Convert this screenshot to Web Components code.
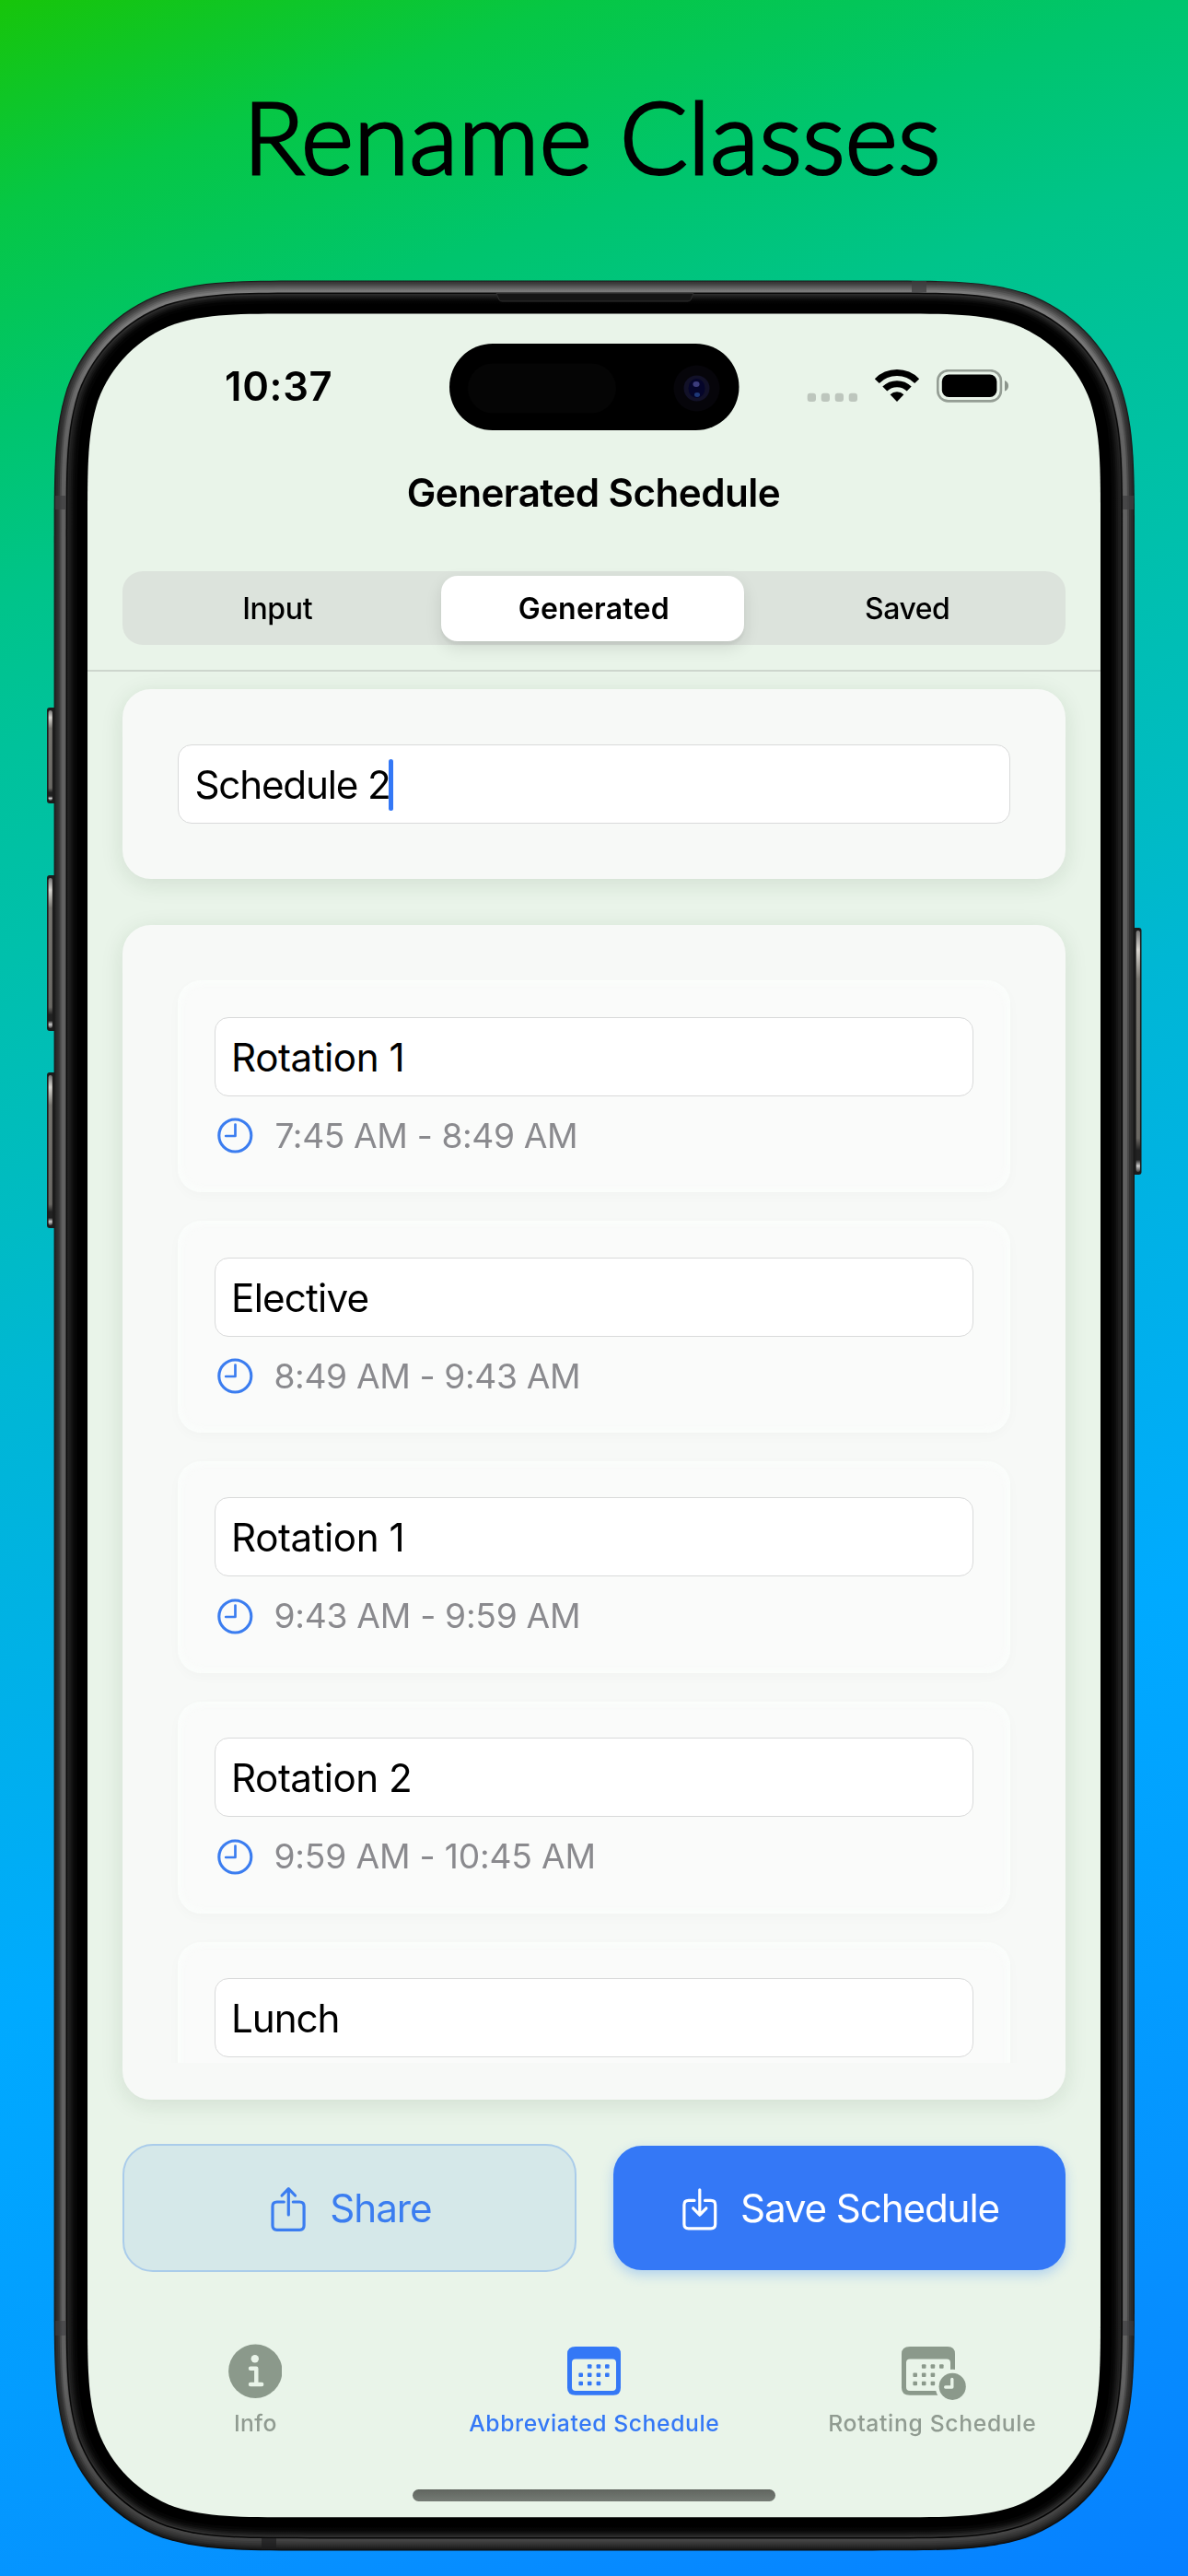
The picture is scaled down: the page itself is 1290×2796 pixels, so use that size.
<!DOCTYPE html>
<html lang="en">
<head>
<meta charset="utf-8">
<title>Rename Classes</title>
<style>
html,body{margin:0;padding:0}
body{width:1290px;height:2796px;overflow:hidden;font-family:Inter,"Liberation Sans",sans-serif;color:#000}
</style>
</head>
<body>
<promo-poster>
  <fit-text slot="headline" w="742">Rename Classes</fit-text>
  <device-frame>
    <status-bar></status-bar>
    <nav-title>Generated Schedule</nav-title>
    <segmented-control></segmented-control>
    <schedule-editor></schedule-editor>
    <action-bar></action-bar>
    <tab-bar></tab-bar>
    <home-indicator></home-indicator>
  </device-frame>
</promo-poster>
<script>
const define = (name, render) => customElements.define(name, class extends HTMLElement {
  connectedCallback() {
    if (this.shadowRoot) return;
    this.attachShadow({ mode: 'open' }).innerHTML = render(this);
  }
});

/* Rounded rectangle with continuous-curvature corners. */
function squircle(x, y, w, h, r) {
  const a = 1.528665 * r, b = 1.08849296 * r, c = 0.86840694 * r, d = 0.63149379 * r,
        e = 0.07491139 * r, f = 0.37282383 * r, g = 0.16905956 * r;
  const X = x + w, Y = y + h;
  return `M${x + a} ${y}L${X - a} ${y}
    C${X - b} ${y} ${X - c} ${y} ${X - d} ${y + e}C${X - f} ${y + g} ${X - g} ${y + f} ${X - e} ${y + d}C${X} ${y + c} ${X} ${y + b} ${X} ${y + a}
    L${X} ${Y - a}C${X} ${Y - b} ${X} ${Y - c} ${X - e} ${Y - d}C${X - g} ${Y - f} ${X - f} ${Y - g} ${X - d} ${Y - e}C${X - c} ${Y} ${X - b} ${Y} ${X - a} ${Y}
    L${x + a} ${Y}C${x + b} ${Y} ${x + c} ${Y} ${x + d} ${Y - e}C${x + f} ${Y - g} ${x + g} ${Y - f} ${x + e} ${Y - d}C${x} ${Y - c} ${x} ${Y - b} ${x} ${Y - a}
    L${x} ${y + a}C${x} ${y + b} ${x} ${y + c} ${x + e} ${y + d}C${x + g} ${y + f} ${x + f} ${y + g} ${x + d} ${y + e}C${x + c} ${y} ${x + b} ${y} ${x + a} ${y}Z`;
}

define('promo-poster', () => `
<style>
:host{display:flex;flex-direction:column;width:1290px;height:2796px;
background:linear-gradient(160deg,#17c50a 0%,#06c745 7%,#00c56d 14%,#00c48a 20%,#00c29b 25%,#00c0ac 32%,#00bbc4 41%,#00b7d4 46%,#00b0ea 57%,#00aaff 67%,#039cff 80%,#0690ff 89%,#067fff 100%)}
.head{height:304px;display:flex;justify-content:center;align-items:flex-start;box-sizing:border-box;padding:80.5px 0 0 2px;
font:300 109px/132px Lato,"Liberation Sans",sans-serif;-webkit-text-stroke:3.2px #000}
</style>
<div class="head"><slot name="headline"></slot></div><slot></slot>`);

/* Metal band and glass edge: [inset, top, side, bottom] */
const RINGS = [
  [0,'#1b1b1b','#191919','#0c0c0c'],[1,'#333','#222','#151515'],[2,'#3c3c3c','#2b2b2b','#1f1f1f'],
  [4,'#4a4a4a','#333','#2a2a2a'],[6,'#5a5a5a','#484848','#333'],[8,'#6a6a6a','#606060','#3b3b3b'],
  [10,'#797979','#636363','#434343'],[12,'#7d7d7d','#565656','#484848'],[13,'#0a0a0a','#0a0a0a','#050505'],
  [14.5,'#2c2c2c','#242424','#303030'],[16,'#1f1f1f','#1d1d1d','#222'],[18,'#141414','#151515','#161616'],
  [20,'#0a0a0a','#0c0c0c','#0c0c0c'],[22,'#030303','#060606','#050505'],[25,'#000','#000','#000']];

define('device-frame', () => {
  const defs = RINGS.map((r, i) => `<linearGradient id="g${i}" x1="0" y1="0" x2="0" y2="1"><stop offset="0" stop-color="${r[1]}"/><stop offset=".015" stop-color="${r[1]}"/><stop offset=".07" stop-color="${r[2]}"/><stop offset=".93" stop-color="${r[2]}"/><stop offset=".985" stop-color="${r[3]}"/></linearGradient>`).join('');
  const rings = RINGS.map((r, i) => { const d = r[0]; return `<path d="${squircle(58.6 + d, 304.4 + d, 1173.4 - 2 * d, 2464 - 2 * d, 186 - d)}" fill="url(#g${i})"/>`; }).join('');
  const key = (x, y, h, flip) => `<g transform="${flip ? `translate(${2 * x + 9} 0) scale(-1 1)` : ''}"><rect x="${x}" y="${y}" width="12" height="${h}" rx="3" fill="#1c1c1c"/><rect x="${x + 1.6}" y="${y + 3}" width="4.2" height="${h - 6}" rx="2" fill="url(#key)"/></g>`;
  return `
<style>
:host{display:grid;width:1290px;height:2492px}
svg{grid-area:1/1;display:block}
main{grid-area:1/1;width:1100px;height:2392px;margin:36px 95px;display:flex;flex-direction:column;min-height:0;overflow:hidden}
</style>
<svg width="1290" height="2492" viewBox="0 304 1290 2492">
<defs>${defs}<linearGradient id="key" x1="0" y1="0" x2="0" y2="1"><stop offset="0" stop-color="#777"/><stop offset=".08" stop-color="#d8d6d0"/><stop offset=".2" stop-color="#77756f"/><stop offset=".86" stop-color="#6b6964"/><stop offset=".91" stop-color="#222"/><stop offset=".95" stop-color="#222"/><stop offset=".975" stop-color="#ccc"/><stop offset="1" stop-color="#444"/></linearGradient></defs>
${key(51, 768, 104)}${key(51, 950, 169)}${key(51, 1164, 169)}${key(1230.5, 1007, 268, true)}
${rings}
<g fill="#3f3f41" opacity=".75"><rect x="990" y="305" width="16" height="12.5"/><rect x="60" y="538" width="12" height="15"/><rect x="1219" y="538" width="12" height="15"/><rect x="60" y="2519" width="12" height="16" opacity=".8"/><rect x="1219" y="2519" width="12" height="16" opacity=".8"/></g>
<rect x="284" y="2755" width="16" height="12" fill="#1c1c1e" opacity=".7"/>
<path d="M539 318.5H753L750 325.5Q749 327 747 327H545Q543 327 542 325.5Z" fill="#161616" stroke="#2e2e2e"/>
<path d="${squircle(95, 340.5, 1100, 2391.8, 150)}" fill="#e9f4e9"/>
</svg>
<main><slot></slot></main>`;
});

define('status-bar', () => `
<style>
:host{display:flex;align-items:center;height:94px;padding:33px 0 0 151px;flex:none;font-size:43.6px;font-weight:600;line-height:50px}
.island{margin-left:128.7px;flex:none}.state{margin-left:73.5px;flex:none}
</style>
<fit-text w="113.6">10:37</fit-text>
<svg class="island" width="314.5" height="94" viewBox="0 0 314.5 94">
<rect width="314.5" height="94" rx="47"/><rect x="20" y="21.5" width="161" height="54" rx="27" fill="#050505"/>
<circle cx="268.5" cy="48.5" r="25" fill="#06050a"/><circle cx="268.5" cy="48.5" r="14" fill="#121128"/><ellipse cx="268.5" cy="48.5" rx="9" ry="10.5" fill="#05052a"/>
<ellipse cx="268" cy="44" rx="3.6" ry="3" fill="#3c3c7c"/><ellipse cx="269" cy="55.5" rx="3" ry="2.4" fill="#1e3878"/></svg>
<svg class="state" width="220" height="38" viewBox="876 401 220 38">
<g fill="#bdc6bd"><rect x="876.7" y="426.7" width="9.3" height="9.4" rx="3"/><rect x="891.7" y="426.7" width="9.3" height="9.4" rx="3"/><rect x="906.7" y="426.7" width="9.3" height="9.4" rx="3"/><rect x="921.7" y="426.7" width="9.3" height="9.4" rx="3"/></g>
<g fill="none" stroke="#000" stroke-width="7"><path d="M952.3 413.6A30.6 30.6 0 0 1 995.7 413.6"/><path d="M960.8 422.1A18.7 18.7 0 0 1 987.2 422.1"/></g>
<path d="M966.6 428.2A10.8 10.8 0 0 1 981.4 428.2L974 436Z"/>
<rect x="1018.3" y="402.2" width="68.6" height="33.2" rx="11.3" fill="none" stroke="#949d94" stroke-width="2.6"/>
<rect x="1022.8" y="406.6" width="59.6" height="24.4" rx="7.5"/><path d="M1091 413Q1095 414.5 1095 418.7Q1095 423 1091 424.5Z" fill="#8b948b"/></svg>`);

define('nav-title', el => `
<style>:host{display:flex;justify-content:center;align-items:center;height:135px;flex:none;font-size:42.2px;font-weight:600;line-height:52px;padding:0 0 18px .5px}</style>
<fit-text w="403">${el.textContent}</fit-text>`);

define('segmented-control', () => `
<style>
:host{display:flex;flex:none;height:80px;box-sizing:border-box;margin:0 38.4px;padding:5px 5px 4.5px;border-radius:22px;background:#dce3dc;font-size:32px;line-height:40px;font-weight:500}
div{flex:1;display:flex;align-items:center;justify-content:center;padding-top:1px}
.first{flex:0 0 328px}
.on{flex:0 0 328.6px;margin:0 10.5px 0 13px;border-radius:18px;background:#fff;font-weight:600;box-sizing:border-box;padding:1.4px 0 0 1px;box-shadow:0 7px 18px rgba(0,0,0,.11),0 4px 3px rgba(0,0,0,.04)}
</style>
<div class="first"><fit-text w="74.5">Input</fit-text></div><div class="on"><fit-text w="161">Generated</fit-text></div><div><fit-text w="90">Saved</fit-text></div>`);

define('surface-card', () => `
<style>
:host{display:block;box-sizing:border-box;padding:60px;border-radius:31px;background:#f7f9f7;box-shadow:0 5px 25px rgba(30,60,30,.115)}
</style><slot></slot>`);

define('text-field', () => `
<style>
:host{display:flex;align-items:center;box-sizing:border-box;height:86px;padding:2px 18.5px 0 20px;border:1.6px solid #d9dada;border-radius:15px;background:#fff;font-size:42.2px;line-height:52px}
</style><slot></slot>`);

define('class-row', el => {
  const [name, nw, time, tw] = ['name', 'nw', 'time', 'tw'].map(k => el.getAttribute(k));
  return `
<style>
:host{display:block;flex:none;box-sizing:border-box;height:230.3px;padding:39.7px;border-radius:26px;background:#fafbfa;box-shadow:inset 0 0 8px 3px rgba(251,254,252,.9),0 4px 14px rgba(30,50,30,.022)}
.time{display:flex;align-items:center;height:40px;margin-top:23px;padding-left:3px;font-size:37.2px;line-height:40px;color:#8a8a8e}
svg{margin-right:24.4px;flex:none}
</style>
<text-field><fit-text w="${nw}">${name}</fit-text></text-field>
${time ? `<div class="time"><svg width="39" height="39" viewBox="0 0 39 39" fill="none" stroke="#3b7df0"><circle cx="19.3" cy="19.5" r="17.5" stroke-width="3.1"/><path d="M19.5 7.5V20H9.2" stroke-width="2.7" stroke-linecap="round" stroke-linejoin="round"/></svg><fit-text w="${tw}">${time}</fit-text></div>` : ''}`;
});

define('schedule-editor', () => `
<style>
:host{display:flex;flex-direction:column;flex:none;margin-top:27px;border-top:2px solid #cdd6cd;padding:19px 38.4px 0}
.name{height:206px}
.name text-field{padding-left:19px}
.name i{flex:none;width:5px;height:56px;border-radius:2.5px;background:#3478f6}
.classes{height:1275px;margin-top:50px}
.list{display:flex;flex-direction:column;gap:30.6px;height:1174.7px;overflow:clip;margin:0 -8px;padding:0 8px}
</style>
<surface-card class="name"><text-field><fit-text w="208.5">Schedule 2</fit-text><i></i></text-field></surface-card>
<surface-card class="classes"><div class="list">
<class-row name="Rotation 1" nw="182.5" time="7:45 AM - 8:49 AM" tw="325.5"></class-row>
<class-row name="Elective" nw="145.5" time="8:49 AM - 9:43 AM" tw="328.5"></class-row>
<class-row name="Rotation 1" nw="182.5" time="9:43 AM - 9:59 AM" tw="328.5"></class-row>
<class-row name="Rotation 2" nw="191" time="9:59 AM - 10:45 AM" tw="345"></class-row>
<class-row name="Lunch" nw="112.5"></class-row>
</div></surface-card>`);

define('action-bar', () => `
<style>
:host{display:flex;align-items:center;flex:none;gap:40px;margin:48.4px 38px 0;height:138.4px;font-size:42.2px;line-height:52px}
div{display:flex;align-items:center;justify-content:center;box-sizing:border-box}
svg{fill:none;stroke:currentColor;stroke-width:3.2;stroke-linecap:round;stroke-linejoin:round;flex:none}
.share{flex:0 0 492.5px;height:138.4px;border-radius:33px;background:#d5e8e9;border:2.6px solid #aaccea;color:#3b7df0;padding-left:3.5px}
.save{flex:1;height:134.6px;border-radius:31px;background:#3478f6;color:#fff;padding-left:3px;box-shadow:0 5px 13px rgba(60,140,250,.32)}
.share svg{margin-right:28.3px}.save svg{margin-right:27.5px}
</style>
<div class="share"><svg width="38" height="50" viewBox="294.7 2372 38 50"><path d="M309 2390H301.5Q296.7 2390 296.7 2394.8V2415.5Q296.7 2420.3 301.5 2420.3H326Q330.8 2420.3 330.8 2415.5V2394.8Q330.8 2390 326 2390H319M314 2404V2376M306.8 2383L314 2375.6L321.2 2383"/></svg><fit-text w="107.6">Share</fit-text></div>
<div class="save"><svg width="37.5" height="50" viewBox="740.5 2373 37.5 50"><path d="M753.5 2389.4H747.2Q742.4 2389.4 742.4 2394.2V2415Q742.4 2419.8 747.2 2419.8H771.4Q776.2 2419.8 776.2 2415V2394.2Q776.2 2389.4 771.4 2389.4H765M759.3 2377.8V2405M752.2 2397.8L759.3 2405.2L766.4 2397.8"/></svg><fit-text w="278.5">Save Schedule</fit-text></div>`);

const dot = (x, y) => `<rect x="${x - 2.3}" y="${y - 2.3}" width="4.6" height="4.6" rx="1"/>`;
const calendar = skip => `<path fill-rule="evenodd" d="M9 3H50Q58 3 58 11V47.7Q58 55.7 50 55.7H9Q0 55.7 0 47.7V11Q0 3 9 3ZM9 16.5Q5 16.5 5 20.5V47Q5 51 9 51H49Q53 51 53 47V20.5Q53 16.5 49 16.5Z"/>`
  + [[24.2,24.5],[33.9,24.5],[43.3,24.5],[14.7,33.7],[24.2,33.7],[33.9,33.7],[43.3,33.7],[14.7,43],[24.2,43],[33.9,43]].filter((_, i) => i !== skip).map(p => dot(...p)).join('');
const ICONS = {
  info: `<svg width="58.6" height="62" viewBox="0 0 58.6 62"><circle cx="29.3" cy="29.7" r="29.2"/><circle cx="28.8" cy="16.2" r="4.2" fill="#e9f4e9"/><path d="M24 26.8H30.3V44M24 44H36.2" fill="none" stroke="#e9f4e9" stroke-width="4.4" stroke-linecap="round" stroke-linejoin="round"/></svg>`,
  calendar: `<svg width="58" height="62" viewBox="0 0 58 62">${calendar()}</svg>`,
  clock: `<svg width="70" height="62" viewBox="0 0 70 62">${calendar(6)}<circle cx="55.2" cy="46.3" r="18.6" fill="#e9f4e9"/><circle cx="55.2" cy="46.3" r="14.6"/><path d="M54.8 38.4V47H47.7" fill="none" stroke="#e9f4e9" stroke-width="3.4" stroke-linecap="round" stroke-linejoin="round"/></svg>`
};
define('tab-item', el => `
<style>
:host{flex:1;display:flex;flex-direction:column;align-items:center;color:#909b91;fill:#8b998b;font-size:24.7px;font-weight:500;line-height:30px}
:host([active]){color:#3478f6;fill:#3478f6}
svg{display:block;margin-bottom:9.2px;transform:translateX(var(--nudge,0))}
</style>${ICONS[el.getAttribute('icon')]}<fit-text w="${el.getAttribute('w')}">${el.textContent}</fit-text>`);

define('tab-bar', () => `
<style>:host{display:flex;flex:none;margin:78.4px -1px 0 -1.6px;height:103px}</style>
<tab-item icon="info" w="44.5">Info</tab-item>
<tab-item icon="calendar" w="271" active>Abbreviated Schedule</tab-item>
<tab-item icon="clock" w="224" style="--nudge:2px">Rotating Schedule</tab-item>`);

define('home-indicator', () => `
<style>:host{display:flex;justify-content:center;margin-top:55px;flex:none}
div{width:393.5px;height:13px;border-radius:6.5px;background:linear-gradient(#60655f,#757b75)}</style><div></div>`);

/* One line of text whose box is its ink width; tracking is adjusted to reach w. */
customElements.define('fit-text', class extends HTMLElement {
  connectedCallback() {
    if (this.shadowRoot) return;
    const text = this.textContent.trim(), w = +this.getAttribute('w'), cs = getComputedStyle(this);
    const ctx = document.createElement('canvas').getContext('2d');
    ctx.font = `${cs.fontWeight} ${cs.fontSize} ${cs.fontFamily}`;
    const m = ctx.measureText(text), left = -m.actualBoundingBoxLeft;
    const track = (w - (m.actualBoundingBoxRight - left)) / (text.length - 1);
    this.attachShadow({ mode: 'open' }).innerHTML =
      `<style>:host{display:block;flex:none;width:${w}px;white-space:nowrap}span{display:block;margin-left:${-left}px;letter-spacing:${track}px}</style><span><slot></slot></span>`;
  }
});
</script>
</body>
</html>
